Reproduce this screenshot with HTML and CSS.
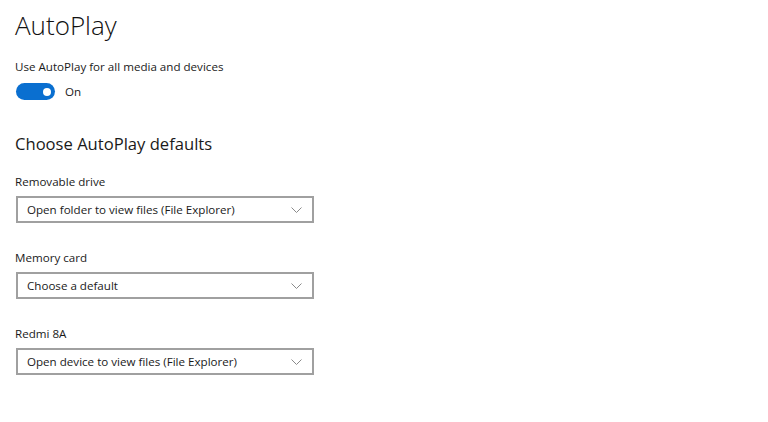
FILE: index.html
```html
<!DOCTYPE html>
<html lang="en">

<head>
	<title>AutoPlay</title>
	<link rel="stylesheet" href="styles.css">
</head>

<body>
	<div class="page">
		<h1 class="title">AutoPlay</h1>

		<p class="label">Use AutoPlay for all media and devices</p>
		<div class="toggle-row">
			<span class="toggle"><span class="knob"></span></span>
			<span class="toggle-text">On</span>
		</div>

		<h2 class="subtitle">Choose AutoPlay defaults</h2>

		<div class="field">
			<p class="label">Removable drive</p>
			<div class="select">
				<span>Open folder to view files (File Explorer)</span>
				<svg class="chevron" width="11" height="6" viewBox="0 0 11 6"><path d="M0.5 0.5 L5.5 5.5 L10.5 0.5" fill="none" stroke="#8a8a8a" stroke-width="1"/></svg>
			</div>
		</div>

		<div class="field">
			<p class="label">Memory card</p>
			<div class="select">
				<span>Choose a default</span>
				<svg class="chevron" width="11" height="6" viewBox="0 0 11 6"><path d="M0.5 0.5 L5.5 5.5 L10.5 0.5" fill="none" stroke="#8a8a8a" stroke-width="1"/></svg>
			</div>
		</div>

		<div class="field">
			<p class="label">Redmi 8A</p>
			<div class="select">
				<span>Open device to view files (File Explorer)</span>
				<svg class="chevron" width="11" height="6" viewBox="0 0 11 6"><path d="M0.5 0.5 L5.5 5.5 L10.5 0.5" fill="none" stroke="#8a8a8a" stroke-width="1"/></svg>
			</div>
		</div>
	</div>
</body>

</html>
```

FILE: styles.css
```css
body {
	margin: 0;
	background: #ffffff;
	color: #1a1a1a;
	font-family: "Open Sans", "Noto Sans", sans-serif;
}
.page {
	padding: 9px 0 0 15px;
}
.title {
	font-size: 26px;
	font-weight: 300;
	margin: 0;
	line-height: 32px;
	color: #111;
}
.label {
	font-size: 11.6px;
	margin: 0;
	line-height: 16px;
}
.page > .label {
	margin-top: 18px;
}
.toggle-row {
	display: flex;
	align-items: center;
	gap: 10px;
	margin-top: 8px;
	padding-left: 1px;
}
.toggle {
	width: 39px;
	height: 17px;
	border-radius: 9px;
	background: #0a6fd0;
	display: flex;
	align-items: center;
	justify-content: flex-end;
	padding-right: 4px;
	box-sizing: border-box;
}
.knob {
	width: 8px;
	height: 8px;
	border-radius: 50%;
	background: #fff;
}
.toggle-text {
	font-size: 11.6px;
}
.subtitle {
	font-size: 16.6px;
	font-weight: 400;
	margin: 32px 0 0 0;
	line-height: 24px;
}
.field {
	margin-top: 18px;
}
.field + .field {
	margin-top: 27px;
}
.select {
	width: 298px;
	height: 27px;
	box-sizing: border-box;
	border: 2px solid #a0a0a0;
	margin: 6px 0 0 1px;
	display: flex;
	align-items: center;
	justify-content: space-between;
	padding: 0 10px 0 9px;
	font-size: 11.6px;
}
.chevron {
	display: block;
}
```
